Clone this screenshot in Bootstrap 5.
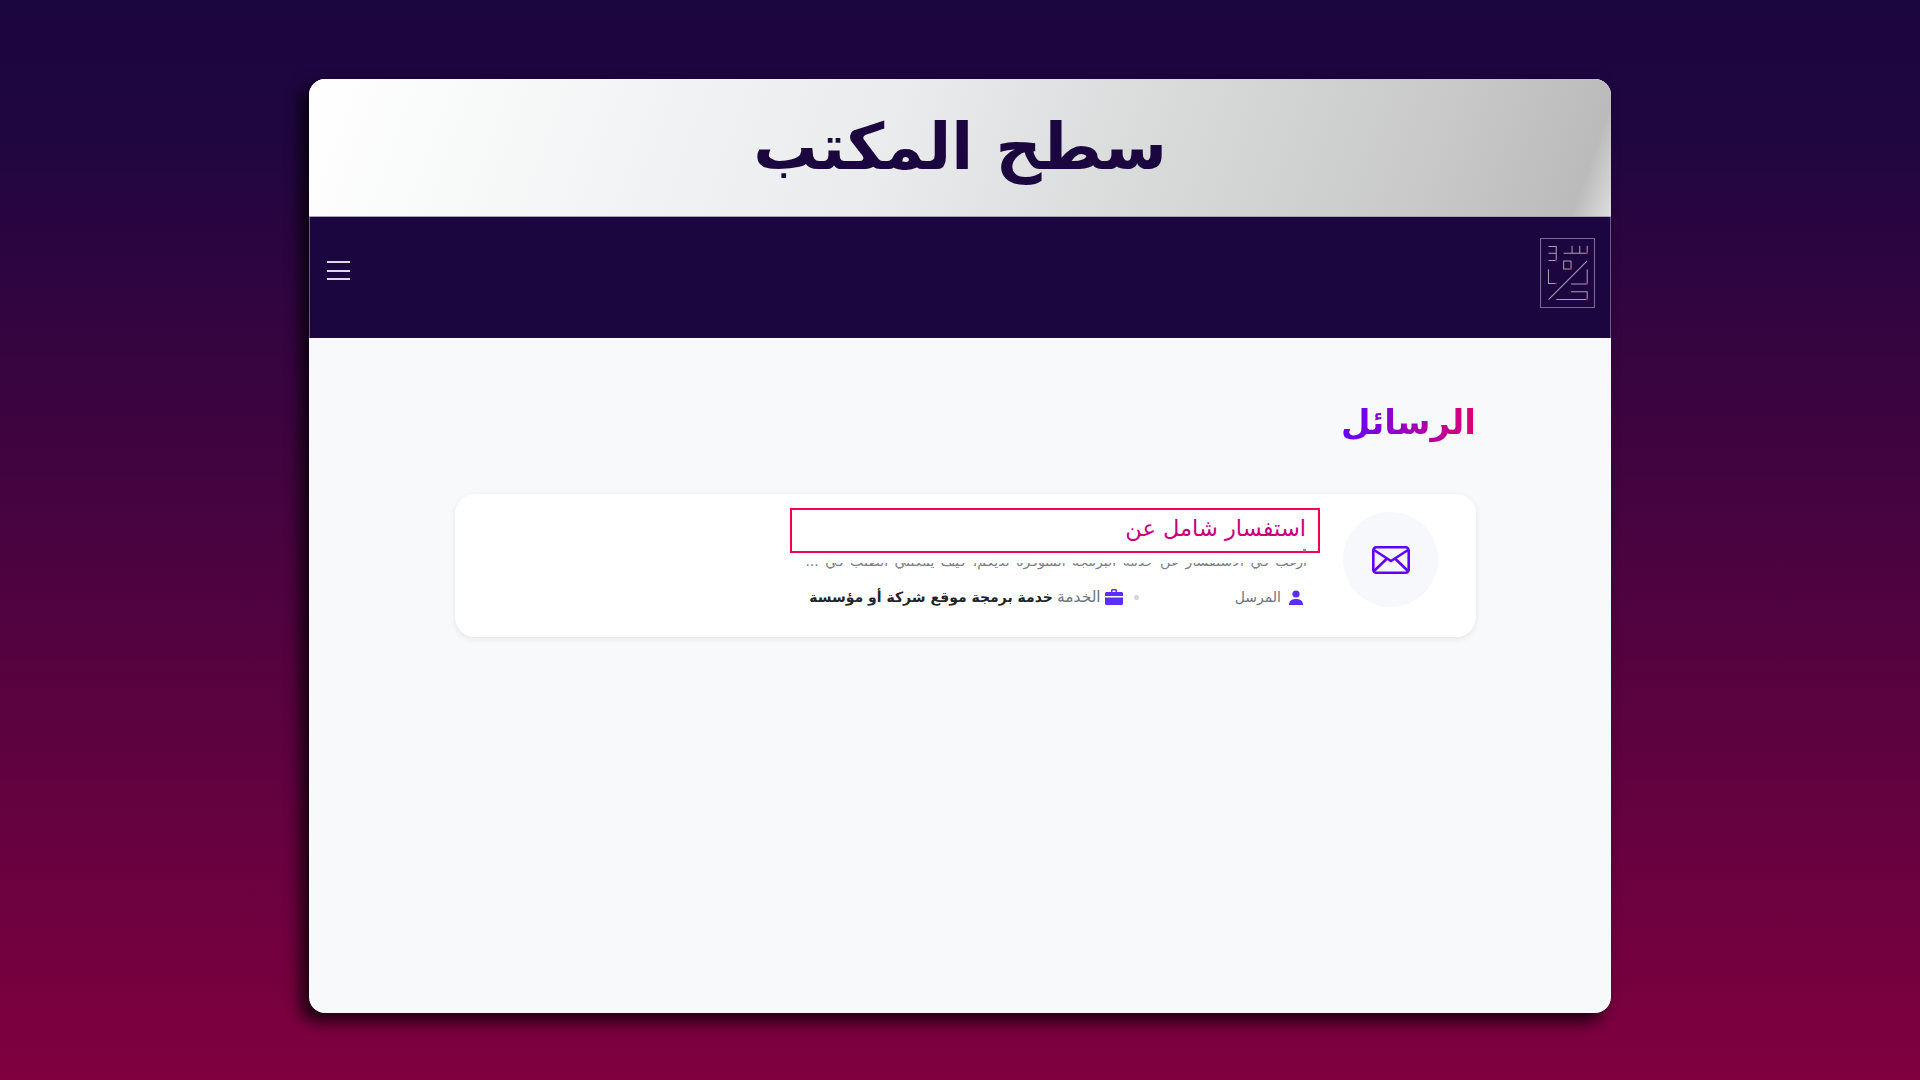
<!DOCTYPE html>
<html lang="ar" dir="rtl">
<head>
    <meta charset="UTF-8">
    <meta name="viewport" content="width=device-width, initial-scale=1.0">
    <title>سطح المكتب</title>
    <link href="https://cdn.jsdelivr.net/npm/bootstrap@5.3.0/dist/css/bootstrap.min.css" rel="stylesheet">
    <style>
        html, body { height: 100%; }
        body {
            font-family: "DejaVu Sans", "Noto Sans", sans-serif;
            background: linear-gradient(180deg, #1c0640 0%, #1f0640 12%, #80003f 100%);
            padding: 79px 309px 67px 309px;
            overflow: hidden;
        }
        .desk-panel {
            height: 934px;
            border-radius: 16px;
            overflow: hidden;
            background: #f8f9fb;
        }
        .desk-wrap { border-radius: 16px; box-shadow: -8px 8px 16px rgba(0, 0, 0, .8); }
        .desk-head {
            height: 138px;
            background: linear-gradient(110deg, #ffffff 0%, #e9ebec 45%, #c8c9c8 85%, #bbbbbb 97%, #dddddd 100%);
            border-bottom: 1px solid #a9a3b5;
        }
        .desk-head h1 { font-size: 64px; font-weight: 700; color: #1c0640; margin: 0; padding-top: 20px; line-height: 96px; }
        .desk-nav {
            height: 121px;
            background: #1c0640;
            border-inline: 1px solid #6b5a85;
            padding: 21px 15px 0 17px;
        }
        .burger { width: 23px; height: 19px; margin-top: 23px; background: none; border: 0; padding: 0; display: flex; flex-direction: column; justify-content: space-between; }
        .burger span { display: block; height: 2px; background: #dcd8e4; }
        .desk-main { padding: 54px 135px 0 146px; }
        .page-head { font-size: 34px; font-weight: 600; margin: 0 0 42px; background: linear-gradient(270deg, #dc0070, #6000ff); -webkit-background-clip: text; background-clip: text; color: transparent; width: max-content; line-height: 60px; }
        .msg-box { border-radius: 20px; background: #fff; height: 143px; padding: 18px 38px 0 0; box-shadow: 0 2px 6px rgba(0,0,0,.08); }
        .msg-round { width: 95px; height: 95px; flex: none; border-radius: 50%; background: #f7f8fb; }
        .msg-body { width: 530px; margin-right: 23px; margin-top: -4px; }
        .msg-title { position: relative; height: 45px; border: 2px solid #f5004f; background: #fff; padding: 0 12px; font-size: 22.5px; line-height: 36px; color: #c9007e; }
        .title-mark { position: absolute; right: 12px; bottom: -1px; width: 3px; height: 3px; background: #6c757d; opacity: .8; }
        .msg-text { position: relative; height: 20px; overflow: hidden; padding: 0 13px; font-size: 14px; word-spacing: 2px; color: #7b7f85; line-height: 16px; white-space: nowrap; }
        .msg-text::before { content: ""; position: absolute; inset: 0 0 auto 0; height: 10px; background: #fff; }
        .msg-meta { padding: 12px 17px 0; font-size: 14px; line-height: 24px; color: #6c757d; white-space: nowrap; }
        .meta-dot { width: 5px; height: 5px; border-radius: 50%; background: #d3d6db; margin: 0 96px 0 11px; }
        .meta-label { font-size: 15.5px; }
        .meta-val { color: #212529; font-weight: 600; font-size: 14px; }
    </style>
</head>
<body>
    <div class="desk-wrap">
        <div class="desk-panel">
            <header class="desk-head text-center">
                <h1>سطح المكتب</h1>
            </header>
            <nav class="desk-nav d-flex justify-content-between align-items-start">
                <svg width="55" height="70" viewBox="120 85 163 208" fill="none" stroke="#a9a0b6" stroke-width="3">
                    <rect x="121" y="86" width="161" height="206" stroke="#766a8d" stroke-width="4"/>
                    <path d="M145 110H168V152H145M145 130H168M190 130H260M215 108V130M238 108V130M260 108V130M190 153H212V177H190ZM145 268L260 153M145 178V220H168M260 178V222H212M212 245H260V268H168"/>
                    <g fill="#a0104f" stroke="none">
                        <circle cx="168" cy="152" r="3"/><circle cx="260" cy="130" r="3"/><circle cx="212" cy="177" r="3"/><circle cx="168" cy="220" r="3"/><circle cx="260" cy="222" r="3"/><circle cx="260" cy="268" r="3"/>
                    </g>
                </svg>
                <button class="burger" type="button" aria-label="القائمة"><span></span><span></span><span></span></button>
            </nav>
            <main class="desk-main">
                <h2 class="page-head">الرسائل</h2>
                <div class="msg-box d-flex align-items-start">
                    <div class="msg-round d-flex align-items-center justify-content-center">
                        <svg width="38" height="28" viewBox="0 0 38 28" fill="none" stroke="#6200ff" stroke-width="2.6">
                            <rect x="1.300" y="1.300" width="35.400" height="25.400" rx="3"/>
                            <path d="M2 4L19 15L36 4M2 25L15 12.500M36 25L23 12.500" />
                        </svg>
                    </div>
                    <div class="msg-body">
                        <div class="msg-title">استفسار شامل عن<span class="title-mark"></span></div>
                        <div class="msg-text">أرغب في الاستفسار عن خدمة البرمجة المتوفرة لديكم، كيف يمكنني الطلب في ...</div>
                        <div class="msg-meta d-flex align-items-center">
                            <svg class="ms-2" width="14" height="15" viewBox="0 0 14 15" fill="#5b2dff"><circle cx="7" cy="4" r="3.6"/><path d="M0 15c0-4 2.500-6 7-6s7 2 7 6z"/></svg>
                            <span>المرسل</span>
                            <span class="meta-dot"></span>
                            <svg class="ms-1" width="18" height="16" viewBox="0 0 18 16" fill="#5b2dff"><path d="M6 3V1.500C6 .7 6.700 0 7.500 0h3c.8 0 1.500.7 1.500 1.500V3h4.500c.8 0 1.500.7 1.500 1.500V7H0V4.500C0 3.700.7 3 1.500 3zm1.500 0h3V1.500h-3zM0 8.500h18v6c0 .8-.7 1.500-1.500 1.500h-15C.7 16 0 15.300 0 14.500z"/></svg>
                            <span class="meta-label">الخدمة</span>
                            <span class="meta-val me-1">خدمة برمجة موقع شركة أو مؤسسة</span>
                        </div>
                    </div>
                </div>
            </main>
        </div>
    </div>
    <script src="https://cdn.jsdelivr.net/npm/bootstrap@5.3.0/dist/js/bootstrap.bundle.min.js"></script>
</body>
</html>
